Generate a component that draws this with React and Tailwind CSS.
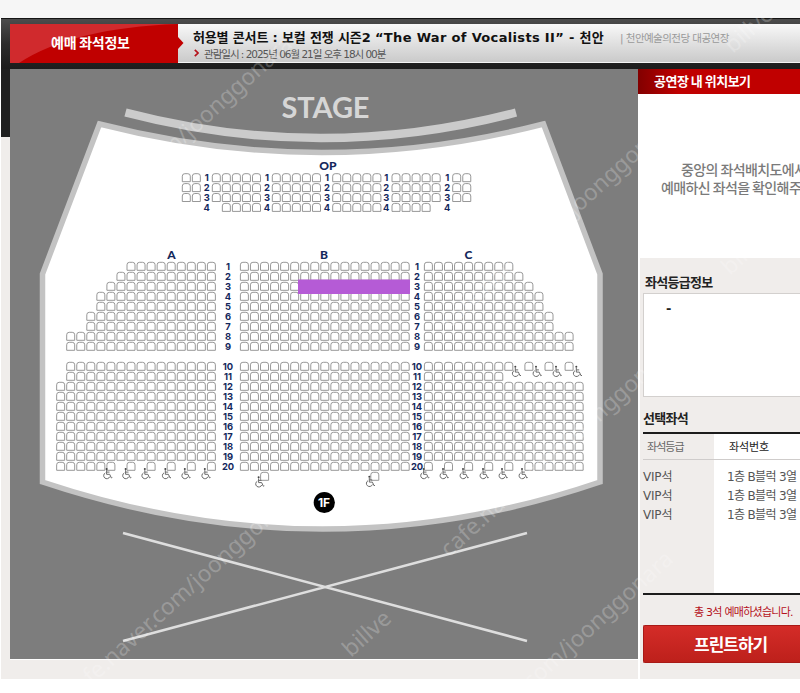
import React from "react";

const PITCH = 10.05;

// seats per row for the two wings, rows 1 to 9
const WING_ROWS = [9, 10, 11, 12, 12, 13, 13, 15, 15];

const range = (from, to) =>
  Array.from({ length: to - from + 1 }, (_, i) => from + i);

const rowY = (row) => (row <= 9 ? 266.3 + (row - 1) * 10 : 366.3 + (row - 10) * 10);

// Columns are counted from the aisle outwards on the left, from the aisle on the right
const leftWingCols = (row) => {
  if (row <= 9) return range(0, WING_ROWS[row - 1] - 1);
  if (row <= 11) return range(0, 14);
  if (row <= 19) return range(0, 15);
  return [0, 2, 4, 6, 8, 10, 11, 12, 13, 14, 15];
};

const rightWingCols = (row) => {
  if (row <= 9) return range(0, WING_ROWS[row - 1] - 1);
  if (row === 10) return [...range(0, 8), 10, 12, 14];
  if (row === 11) return range(0, 7);
  if (row <= 19) return range(0, 15);
  return [0, 2, 4, 6, 8, 10, 11, 12, 13, 14, 15];
};

const OP_GROUPS = [
  { x: 186.3, count: 2, last: [] },
  { x: 216.3, count: 5, last: [1, 2, 3, 4] },
  { x: 276.3, count: 5, last: [0, 1, 2, 3, 4] },
  { x: 336.7, count: 5, last: [0, 1, 2, 3, 4] },
  { x: 396, count: 5, last: [0, 1, 2, 3] },
  { x: 456.7, count: 2, last: [] },
];

const OP_NUMBERS = [206.7, 267, 327, 386.2, 447.2];

const WHEELCHAIRS = [
  ...[107.3, 126.3, 145.5, 166, 185.5, 205.5].map((x) => [x, 473.7]),
  ...[424.3, 443.7, 463.7, 483.7, 502.7, 522.7].map((x) => [x, 473.7]),
  ...[516, 536.7, 556.7, 577].map((x) => [x, 371.5]),
  [259.3, 482],
  [370, 481.5],
];

const WATERMARKS = [
  [66, 251, "cafe.naver.com/joonggonara"],
  [74, 701, "cafe.naver.com/joonggonara"],
  [450, 329, "cafe.naver.com/joonggonara"],
  [449, 558, "cafe.naver.com/joonggonara"],
  [447, 766, "cafe.naver.com/joonggonara"],
  [351, 658, "billve"],
  [733, 54, "billve"],
  [730, 276, "billve"],
];

const BOOKED = [
  { grade: "VIP석", seat: "1층 B블럭 3열" },
  { grade: "VIP석", seat: "1층 B블럭 3열" },
  { grade: "VIP석", seat: "1층 B블럭 3열" },
];

export default function App() {
  return (
    <div className="relative h-[693px] w-[800px] overflow-hidden bg-white font-['DejaVu_Sans','Noto_Sans_CJK_KR',sans-serif]">
      <div className="h-[18px] bg-[#f6f6f6]" />
      <div className="ml-px flex h-[661px] flex-col bg-[#f0edeb]">
        <Header />
        <div className="flex h-[610px]">
          <div className="w-[9px] shrink-0">
            <div className="h-[68px] bg-[#1f1f1f]" />
          </div>
          <div className="h-[591px] w-[628px] shrink-0 border-b border-white">
            <SeatMap />
          </div>
          <Sidebar />
        </div>
      </div>
      <Watermark />
    </div>
  );
}

function Header() {
  return (
    <div className="h-[51px] shrink-0 border-t border-[#151515] bg-linear-to-b from-[#4c4c4c] via-[#2c2c2c] to-[#1c1c1c] pt-[5px] pl-[9px]">
      <div className="flex h-[39px] border-b border-[#f4f4f4] bg-linear-to-b from-[#f8f8f8] to-[#cacaca]">
        {/* Red tab */}
        <div className="relative flex h-[39px] w-[168px] shrink-0 items-center bg-[#c00000]">
          <svg className="absolute top-0 left-0" width="174" height="39" viewBox="0 0 174 39">
            <path d="M168 13 L173.5 19 L168 25 Z" fill="#c00000" />
            <path d="M0 0 H168 Q62 4 9 39 H0 Z" fill="#d02a2d" />
          </svg>
          <span className="relative -mt-0.5 ml-[41px] text-[14px] font-bold tracking-[-0.25px] whitespace-nowrap text-white font-['Noto_Sans_CJK_KR',sans-serif]">
            예매 좌석정보
          </span>
        </div>
        <div className="flex flex-col pl-[15px] whitespace-nowrap">
          <div className="flex h-[27px] items-center">
            <span className="w-[182px] text-[13px] font-bold tracking-[-0.15px] text-[#111]">
              허용별 콘서트 : 보컬 전쟁 시즌2
            </span>
            <span className="w-[245px] text-[13px] font-bold tracking-[0.33px] text-[#111]">
              “The War of Vocalists II” - 천안
            </span>
            <span className="mt-[3px] text-[10.5px] tracking-[-0.55px] text-[#999]">| 천안예술의전당 대공연장</span>
          </div>
          <div className="-mt-[2px] ml-px flex h-3 items-center">
            <svg className="-mt-[5px] mr-[5px]" width="5" height="8" viewBox="0 0 5 8">
              <path d="M0.8 0.8 L4 4 L0.8 7.2" fill="none" stroke="#b5121b" strokeWidth="1.7" />
            </svg>
            <span className="text-[10.5px] tracking-[-1.03px] text-[#555]">
              관람일시 : 2025년 06월 21일 오후 18시 00분
            </span>
          </div>
        </div>
      </div>
    </div>
  );
}

function Seat({ x, y }) {
  return (
    <path
      d={`M${x - 4} ${y + 4} V${y - 1.5} Q${x - 4} ${y - 4} ${x - 1.5} ${y - 4} H${x + 1.5} Q${x + 4} ${y - 4} ${x + 4} ${y - 1.5} V${y + 4} Z`}
    />
  );
}

function Wheelchair({ x, y }) {
  return (
    <g transform={`translate(${x} ${y})`} fill="none" stroke="#6a6a6a" strokeWidth="1">
      <circle cx="-0.7" cy="-4.7" r="1" fill="#444" stroke="none" />
      <path d="M-0.7 -3.6 V0.6 H2.4 L4 4.2 L5 3.8 M-0.7 -1.6 H2.2" />
      <path d="M-2 -0.8 A3.1 3.1 0 1 0 2.4 3" />
    </g>
  );
}

function SeatMap() {
  const rows = range(1, 20);
  return (
    <svg className="block bg-[#7d7d7d]" width="628" height="590" viewBox="10 69 628 590">
      {/* Stage */}
      <text
        x="281.5"
        y="118"
        textLength="88"
        fontSize="29"
        fontWeight="700"
        fill="#d6d6d6"
        className="font-['Lato',sans-serif]"
      >
        STAGE
      </text>
      <path d="M125.5 112.5 Q321 163.5 516 112.5" fill="none" stroke="#cbcbcb" strokeWidth="8.5" />

      {/* Hall outline */}
      <path
        d="M99.5 124 Q322 181 543.5 124 L600 274 V482 Q324 576 42.5 482 V274 Z"
        fill="#fff"
        stroke="#c3c3c3"
        strokeWidth="5.5"
      />

      {/* Unused area below the hall */}
      <path d="M123 533 L527 641 M123 641 L527 533" stroke="#dedede" strokeWidth="2.6" />

      {/* Seats */}
      <g fill="#fff" stroke="#8c8c8c" strokeWidth="0.9">
        {OP_GROUPS.map((group) =>
          [0, 1, 2, 3].map((row) =>
            (row === 3 ? group.last : range(0, group.count - 1)).map((col) => (
              <Seat key={`${group.x}-${row}-${col}`} x={group.x + col * PITCH} y={177.7 + row * 9.9} />
            ))
          )
        )}
        {rows.map((row) => (
          <g key={row}>
            {leftWingCols(row).map((col) => (
              <Seat key={`a${col}`} x={211.4 - col * PITCH} y={rowY(row)} />
            ))}
            {range(0, 16).map((col) => (
              <Seat key={`b${col}`} x={244.4 + col * PITCH} y={rowY(row)} />
            ))}
            {rightWingCols(row).map((col) => (
              <Seat key={`c${col}`} x={428.4 + col * PITCH} y={rowY(row)} />
            ))}
          </g>
        ))}
        <Seat x={264.6} y={476.3} />
        <Seat x={374.8} y={476.3} />
      </g>

      {WHEELCHAIRS.map(([x, y]) => (
        <Wheelchair key={`${x}-${y}`} x={x} y={y} />
      ))}

      {/* Block names and row numbers */}
      <g fill="#14285c" textAnchor="middle">
        <g fontSize="12" fontWeight="900" className="font-['Lato',sans-serif]">
          <text x="328" y="169.8">OP</text>
          <text x="171.5" y="258.8">A</text>
          <text x="324" y="258.8">B</text>
          <text x="468.5" y="258.8">C</text>
        </g>
        <g fontSize="9.4" fontWeight="700" className="font-['Inter',sans-serif]">
          {OP_NUMBERS.map((x) =>
            [1, 2, 3, 4].map((n) => (
              <text key={`${x}-${n}`} x={x} y={181.2 + (n - 1) * 10}>{n}</text>
            ))
          )}
          {rows.map((row) => (
            <React.Fragment key={row}>
              <text x="228" y={rowY(row) + 3.6}>{row}</text>
              <text x="417" y={rowY(row) + 3.6}>{row}</text>
            </React.Fragment>
          ))}
        </g>
      </g>

      {/* Booked seats */}
      <rect x="298" y="279.5" width="112" height="14.5" fill="#b55bd6" />

      {/* Floor badge */}
      <circle cx="324.3" cy="502.5" r="10.6" fill="#000" />
      <text
        x="324"
        y="507"
        fontSize="12"
        fontWeight="700"
        fill="#fff"
        textAnchor="middle"
        className="font-['Inter',sans-serif]"
      >
        1F
      </text>
    </svg>
  );
}

function Sidebar() {
  return (
    <div className="flex h-[610px] w-[162px] shrink-0 flex-col overflow-hidden whitespace-nowrap">
      <div className="flex h-[25px] shrink-0 items-center bg-linear-to-r from-[#820000] to-[#c00000] to-25% pb-0.5 pl-4 text-[13px] font-bold tracking-[-0.5px] text-white font-['Noto_Sans_CJK_KR',sans-serif]">
        공연장 내 위치보기
      </div>
      <div className="h-[164px] shrink-0 bg-white pt-[67px] text-[14px] leading-[17.5px] font-medium tracking-[-0.6px] text-[#7a7a7a] font-['Noto_Sans_CJK_KR',sans-serif]">
        <p className="pl-[43px]">중앙의 좌석배치도에서</p>
        <p className="pl-[23px]">예매하신 좌석을 확인해주세요</p>
      </div>
      <div className="flex grow flex-col border-l-2 border-white pl-[3px]">
        <h2 className="mt-[14px] h-[21px] pl-0.5 text-[13px] leading-5 font-bold tracking-[-0.7px] text-[#222] font-['Noto_Sans_CJK_KR',sans-serif]">
          좌석등급정보
        </h2>
        <div className="h-[104px] border border-r-0 border-[#d3d0ce] bg-white pt-[5px] pl-[22px] text-[13px] font-bold text-[#222]">
          -
        </div>
        <h2 className="mt-[11px] h-[21px] text-[13px] leading-5 font-bold tracking-[-0.7px] text-[#222] font-['Noto_Sans_CJK_KR',sans-serif]">
          선택좌석
        </h2>
        <div className="mt-[3px] flex h-[163px] flex-col border-t-2 border-b-2 border-[#1c1c1c]">
          <div className="flex h-[26px] shrink-0 border-b border-[#cfcccb] text-[11px] leading-[28px]">
            <div className="w-[71px] pl-1 tracking-[-0.95px] text-[#666]">좌석등급</div>
            <div className="grow bg-white pl-[15px] tracking-[-0.1px] text-[#222]">좌석번호</div>
          </div>
          <div className="flex grow text-[12px] leading-[19px] tracking-[-0.5px] text-[#555]">
            <div className="w-[71px] pt-2 tracking-[-0.2px]">
              {BOOKED.map((item, i) => (
                <p key={i}>{item.grade}</p>
              ))}
            </div>
            <div className="grow bg-white pt-2 pl-[13px] tracking-[-0.65px]">
              {BOOKED.map((item, i) => (
                <p key={i}>{item.seat}</p>
              ))}
            </div>
          </div>
        </div>
        <p className="mt-2 h-5 pl-[51px] text-[11px] leading-5 tracking-[-0.75px] text-[#b5121b]">
          총 3석 예매하셨습니다.
        </p>
        <button className="mt-[2px] h-[38px] rounded-l-[2px] border border-r-0 border-[#a81a17] bg-linear-to-b from-[#d42c28] to-[#bd201b] pl-[50px] text-left text-[17px] leading-[32px] font-bold tracking-[-1px] text-white font-['Noto_Sans_CJK_KR',sans-serif]">
          프린트하기
        </button>
      </div>
    </div>
  );
}

function Watermark() {
  return (
    <svg className="pointer-events-none absolute top-0 left-0" width="800" height="679" viewBox="0 0 800 679">
      <g fill="#fff" fillOpacity="0.23" fontSize="22.8" className="font-['Noto_Sans',sans-serif]">
        {WATERMARKS.map(([x, y, label]) => (
          <text key={`${x}-${y}`} transform={`translate(${x} ${y}) rotate(-42)`}>
            {label}
          </text>
        ))}
      </g>
    </svg>
  );
}
